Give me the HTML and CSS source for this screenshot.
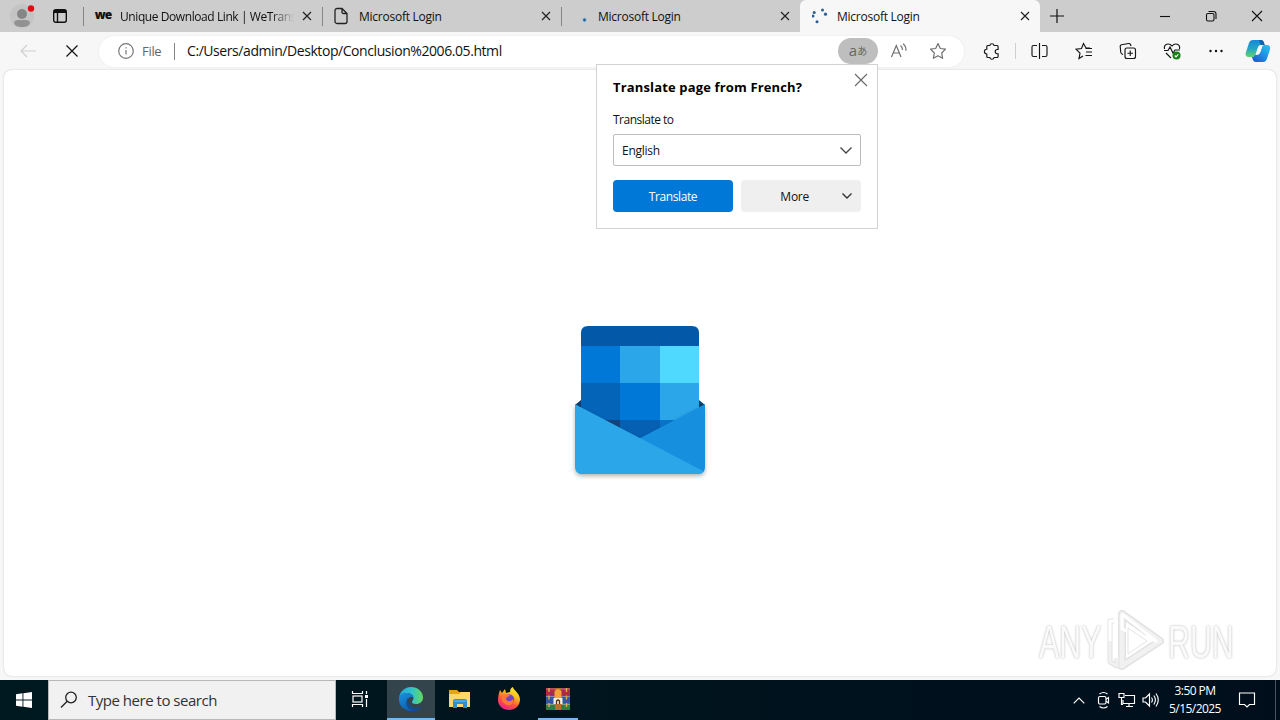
FILE: index.html
```html
<!DOCTYPE html>
<html lang="en">
<head>
<meta charset="utf-8">
<title>Microsoft Login</title>
<link rel="stylesheet" href="styles.css">
</head>
<body>
<div class="screen">
  <header class="tabbar">
    <div class="tab-tools">
      <svg class="avatar" width="26" height="26" viewBox="0 0 26 26"><circle cx="13" cy="13" r="12" fill="#c4c4c4"/><circle cx="13" cy="11" r="5" fill="#868686"/><path d="M5 20c0-2 2-3 4-3h8c2 0 4 1 4 3-1 3-4 4-8 4s-7-1-8-4z" fill="#929292"/><circle cx="22" cy="5.500" r="3.200" fill="#e30a14"/></svg>
      <svg class="workspaces" width="16" height="16" viewBox="0 0 16 16" fill="none" stroke="#111" stroke-width="1.400"><rect x="1.700" y="1.700" width="12.600" height="12.600" rx="2"/><path d="M2 3.500h12" stroke-width="3"/><path d="M5.500 5v9"/></svg>
    </div>
    <div class="tab">
      <span class="favicon we">we</span><span class="tab-title fade">Unique Download Link | WeTrans</span>
      <svg class="close" viewBox="0 0 10 10"><path d="M1 1l8 8M9 1l-8 8"/></svg>
    </div>
    <div class="tab">
      <span class="favicon"><svg width="16" height="18" viewBox="0 0 16 18" fill="none" stroke="#222" stroke-width="1.300"><path d="M3 1.500h5l5 5v8a2 2 0 0 1-2 2H3a2 2 0 0 1-2-2v-11a2 2 0 0 1 2-2zM8 1.500V5q0 1.500 1.500 1.500H13"/></svg></span><span class="tab-title">Microsoft Login</span>
      <svg class="close" viewBox="0 0 10 10"><path d="M1 1l8 8M9 1l-8 8"/></svg>
    </div>
    <div class="tab">
      <span class="favicon"><svg width="16" height="16" viewBox="0 0 16 16"><circle cx="11.500" cy="12" r="2.400" fill="#9fc6e2"/><circle cx="11.500" cy="12" r="1.400" fill="#255a8c"/></svg></span><span class="tab-title">Microsoft Login</span>
      <svg class="close" viewBox="0 0 10 10"><path d="M1 1l8 8M9 1l-8 8"/></svg>
    </div>
    <div class="tab active">
      <span class="favicon"><svg width="16" height="16" viewBox="0 0 16 16" fill="#2b5f93"><circle cx="1" cy="8" r="1.500"/><circle cx="2.200" cy="4.500" r="1.500"/><circle cx="10.500" cy="2" r="1.500"/><circle cx="13.500" cy="6.200" r="1.600"/><circle cx="5" cy="13.700" r="1.500"/></svg></span><span class="tab-title">Microsoft Login</span>
      <svg class="close" viewBox="0 0 10 10"><path d="M1 1l8 8M9 1l-8 8"/></svg>
    </div>
    <div class="newtab"><svg width="14" height="14" viewBox="0 0 14 14" stroke="#111" stroke-width="1.200"><path d="M7 0v14M0 7h14"/></svg></div>
    <div class="window-buttons">
      <svg viewBox="0 0 46 32"><path d="M18 16.500h10"/></svg>
      <svg viewBox="0 0 46 32"><rect x="18.500" y="13.500" width="7.500" height="7.500" rx="1.500"/><path d="M20.500 11.500h5q2.500 0 2.500 2.500v5"/></svg>
      <svg viewBox="0 0 46 32"><path d="M18 11l10 10M28 11l-10 10"/></svg>
    </div>
  </header>

  <nav class="toolbar">
    <div class="cell"><svg width="16" height="14" viewBox="0 0 16 14" fill="none" stroke="#cfcfcf" stroke-width="1.200"><path d="M16 7H1M7 1L1 7l6 6"/></svg></div>
    <div class="cell"><svg width="12" height="12" viewBox="0 0 12 12" stroke="#111" stroke-width="1.200"><path d="M.5.500l11 11M11.500.500l-11 11"/></svg></div>
    <div class="address">
      <svg class="info" width="16" height="16" viewBox="0 0 16 16" fill="none" stroke="#777" stroke-width="1.200"><circle cx="8" cy="8" r="7.300"/><path d="M8 7v4.500M8 4.200v1.300"/></svg>
      <span class="scheme">File</span>
      <span class="url">C:/Users/admin/Desktop/Conclusion%2006.05.html</span>
      <span class="translate-chip"><span>a</span><span class="kana">あ</span></span>
      <svg class="read" width="18" height="16" viewBox="0 0 18 16" fill="none" stroke="#707070" stroke-width="1.200"><path d="M1.500 14L6.300 2.500 11 14M3.300 10h6M10.500 2.500q2 1.500 2 4.500M13 .8q3.300 2.500 3 7"/></svg>
      <svg class="star" width="18" height="18" viewBox="0 0 18 18" fill="none" stroke="#707070" stroke-width="1.200" stroke-linejoin="round"><path d="M9 1.500l2.300 5 5.200.700-3.800 3.800.9 5.300L9 13.800l-4.600 2.500.9-5.300L1.500 7.200l5.200-.7z"/></svg>
    </div>
    <div class="actions">
      <div class="cell puzzle"><svg viewBox="0 0 18 18"><path d="M4.800 3.500h2a2.200 2.200 0 0 1 4.300 0h3q1 0 1 1v3h-.8a2.100 2.100 0 0 0 0 4.200h.8v2.800q0 1-1 1h-3a2.200 2.200 0 0 1-4.300 0h-2q-1 0-1-1v-2.500a2.200 2.200 0 0 1 0-4.800V4.500q0-1 1-1z"/></svg></div>
      <div class="rule"></div>
      <div class="cell split"><svg viewBox="0 0 18 18"><path d="M9.500 1v16M7 3.500H3.500Q2 3.500 2 5v8q0 1.500 1.500 1.500H7M12 3.500h3.500Q17 3.500 17 5v8q0 1.500-1.500 1.500H12"/></svg></div>
      <div class="cell"><svg viewBox="0 0 18 18"><path d="M15 6h-4L8.500 1.500l-2 5-5.500.700 4 4L4 16.500l4-2.500M10.500 6.500H17M11 10h6M10.500 13.500h6.500"/></svg></div>
      <div class="cell"><svg viewBox="0 0 18 18"><rect x="6" y="6" width="10.500" height="10.500" rx="2"/><path d="M11.250 8.500v5.500M8.500 11.250H14M4 12.500l-1-.5Q2 11.500 1.800 10.500L1.200 4.500Q1 3 2.500 2.700l7-1.200q1.500-.2 2 1l.5 1.500"/></svg></div>
      <div class="cell"><svg viewBox="0 0 18 18"><path d="M1.500 7C.5 2 6 .5 9 4c3-3.500 8.500-2 7.500 3M1 8.500h4L7 5l3 6 2-3h5M3 11l5 5"/><circle cx="13.500" cy="13.500" r="4" fill="#168116" stroke="none"/><path d="M11.800 13.500l1.200 1.300 2.300-2.500" stroke="#fff"/></svg></div>
      <div class="cell"><svg viewBox="0 0 18 18"><g fill="#111" stroke="none"><circle cx="3.500" cy="9" r="1.200"/><circle cx="9" cy="9" r="1.200"/><circle cx="14.500" cy="9" r="1.200"/></g></svg></div>
      <svg class="copilot" width="26" height="24" viewBox="0 0 26 24"><defs><linearGradient id="cp1" x1="0" y1="0" x2="0" y2="1"><stop offset="0" stop-color="#1787d8"/><stop offset=".5" stop-color="#22a6c7"/><stop offset="1" stop-color="#63d26a"/></linearGradient><linearGradient id="cp2" x1="1" y1="0" x2="0" y2="1"><stop offset="0" stop-color="#2cc6f2"/><stop offset="1" stop-color="#1554d1"/></linearGradient></defs><path d="M8 1h8q2 0 2.700 2l1 3h-4q-2 0-2.700 2l-2.500 7.500Q10 18 7.500 18H4c-3 0-4-2-3-5L4 4Q5 1 8 1z" fill="url(#cp1)"/><path d="M19.500 6H22q4 0 3 4.500l-3 9Q21 23 18 23h-7q-2.500 0-3.200-2.500L7 18q2.500 0 3.500-2.500l1 .5q3 0 4-3l2-6q.5-1 2-1z" fill="url(#cp2)"/><path d="M14 1h2q2 0 2.700 2l1 3h-4z" fill="#1260ae"/></svg>
    </div>
  </nav>

  <main class="viewport">
    <svg class="mail-logo" width="138" height="160" viewBox="0 0 138 160">
      <defs><clipPath id="calendar"><path d="M10 112V11q0-7 7-7h104q7 0 7 7v101l-59 20z"/></clipPath><clipPath id="envelope"><path d="M4 82l65 34 65-34v63q0 7-7 7H11q-7 0-7-7z"/></clipPath><filter id="soft" x="-10%" y="-10%" width="120%" height="130%"><feDropShadow dx="0" dy="2" stdDeviation="2" flood-color="#000" flood-opacity=".3"/></filter></defs>
      <path d="M4 83l6-5h118l6 5-65 34z" fill="#123b6d"/>
      <g clip-path="url(#calendar)"><path d="M10 4h118v20H10z" fill="#0359a7"/><path d="M10 24h39v37H10zM49 61h40v37H49z" fill="#0078d7"/><path d="M49 24h40v37H49zM89 61h39v37H89z" fill="#2aa6e9"/><path d="M89 24h39v37H89z" fill="#50d9ff"/><path d="M10 61h39v37H10z" fill="#0364b8"/><path d="M10 98h39v20H10z" fill="#14447d"/><path d="M49 98h40v20H49z" fill="#0560b3"/><path d="M89 98h39v20H89z" fill="#0874ca"/></g>
      <g filter="url(#soft)"><g clip-path="url(#envelope)"><path d="M134 82v72H4l65-38z" fill="#158fdf"/><path d="M4 82l130 68v6H4z" fill="#2aa6e9"/></g></g>
    </svg>
    <div class="watermark">
      <span class="wm-any">ANY</span>
      <svg width="60" height="64" viewBox="0 0 60 64" fill="none"><g stroke-linejoin="round"><path d="M17 5v52l38-25z" stroke="#e2e2e2" stroke-width="8"/><path d="M9 12H5v41l7 4v-8" stroke="#e2e2e2" stroke-width="5"/><path d="M9 12H5v41l7 4v-8" stroke="#f1f1f1" stroke-width="3"/><path d="M17 5v52l38-25z" stroke="#f1f1f1" stroke-width="5"/><path d="M17 5v15l34 12L17 5M9 12H5v20" stroke="#fff" stroke-width="3"/><path d="M23 19v26l19-13z" fill="#fff" stroke="#e4e4e4"/></g></svg>
      <span class="wm-run">RUN</span>
    </div>
  </main>

  <section class="translate">
    <div class="translate-head"><h2>Translate page from French?</h2><svg width="14" height="14" viewBox="0 0 14 14" stroke="#666" stroke-width="1.100"><path d="M1 1l12 12M13 1L1 13"/></svg></div>
    <div class="field-label">Translate to</div>
    <div class="select"><span>English</span><svg width="12" height="7" viewBox="0 0 12 7" fill="none" stroke="#444" stroke-width="1.300"><path d="M.5.500L6 6 11.500.500"/></svg></div>
    <div class="buttons"><div class="btn primary"><span>Translate</span></div><div class="btn more"><span>More</span><svg width="10" height="6" viewBox="0 0 10 6" fill="none" stroke="#333" stroke-width="1.400"><path d="M.5.500L5 5 9.500.500"/></svg></div></div>
  </section>

  <footer class="taskbar">
    <div class="start"><svg width="16" height="16" viewBox="0 0 16 16" fill="#fff"><path d="M0 2.200L6.500 1.300v6.300H0zM7.400 1.200L16 0v7.600H7.400zM0 8.400h6.500v6.300L0 13.800zM7.400 8.400H16V16l-8.600-1.200z"/></svg></div>
    <div class="search"><svg width="18" height="18" viewBox="0 0 18 18" fill="none" stroke="#222" stroke-width="1.300"><circle cx="11" cy="6.500" r="5.300"/><path d="M7.200 10.300L1 16.500"/></svg><span>Type here to search</span></div>
    <div class="task"><svg width="18" height="18" viewBox="0 0 18 18" fill="none" stroke="#fff" stroke-width="1.200"><path d="M1.500 1v2.500h10V1M1.500 17v-2.500h10V17M15.500 1v3M15.500 9v8"/><rect x="2" y="6" width="9" height="6"/><path d="M14 5h3v3h-3z" fill="#fff" stroke="none"/></svg></div>
    <div class="task current open"><svg width="26" height="26" viewBox="0 0 26 26"><defs><linearGradient id="ea" x1="0" y1=".3" x2="1" y2=".3"><stop offset="0" stop-color="#23a5df"/><stop offset=".55" stop-color="#31c5c7"/><stop offset="1" stop-color="#65d85a"/></linearGradient><linearGradient id="eb" x1="0" y1="0" x2=".6" y2="1"><stop offset="0" stop-color="#1a91df"/><stop offset="1" stop-color="#0a5aaa"/></linearGradient></defs><path d="M1 12C2 5 7 1 13 1c7 0 12 5 12 10.500 0 4-3 6.500-7 6.500-3 0-4-1-4-2 0-1 1.500-1.500 1.500-4C15.500 9 12 7 8.500 7 5 7 2 9 1 12z" fill="url(#ea)"/><path d="M1 12c1-3.500 4-5 7.500-5 4 0 7 2 7 5-1-1-2-1-3-1-3 1-4 4-3 7 1 3 4 5 8 5 2 0 4-1 6-2-2.500 3-6 4-9.500 4C6 25 0 19 1 12z" fill="url(#eb)"/><path d="M10 12c-4 5-1 11 5 12.800 4 .2 7-1.500 9-4.300-3 1.800-8 2-11-.5-3-2.300-3-5-3-8z" fill="#134c91"/></svg></div>
    <div class="task"><svg width="24" height="22" viewBox="0 0 24 22"><path d="M1 2h8l2 2h11v4H1z" fill="#e7a21b"/><path d="M1 6h10l2-2h9v15H1z" fill="#ffd76a"/><path d="M5 20v-7q0-2 2-2h10q2 0 2 2v7h-4v-4H9v4z" fill="#2f8ed2"/><path d="M6 13h12" stroke="#6bc2ee" stroke-width="1"/></svg></div>
    <div class="task firefox"><svg width="26" height="26" viewBox="0 0 26 26"><defs><linearGradient id="fa" x1=".8" y1="0" x2=".3" y2="1"><stop offset="0" stop-color="#fff045"/><stop offset=".35" stop-color="#ffbd20"/><stop offset=".65" stop-color="#ff563b"/><stop offset="1" stop-color="#e5228c"/></linearGradient></defs><path d="M4 4l2 3 3-4 1 4 4-1q0-4 3-5c0 3 6 5 7 12 0 7-5 11-11 11S2 20 2 14c0-4 1-7 2-10z" fill="url(#fa)"/><circle cx="13" cy="13.500" r="5.200" fill="#7743c5"/><path d="M6 9c3-2 5 0 8 0-1 2-4 2-4 4 1 3 5 3 7 0 2 5-4 8-8 5-3-2-4-5-3-9z" fill="#ff7a2c"/></svg></div>
    <div class="task open rar"><svg width="24" height="24" viewBox="0 0 24 24"><path d="M0 1h24v7H0z" fill="#a92c43"/><path d="M0 8h24v8H0z" fill="#3456a9"/><path d="M0 16h24v7H0z" fill="#278245"/><path d="M0 2h24M0 9.500h24M0 17.500h24" stroke="#e2b7b7" stroke-width="1" opacity=".5"/><path d="M3 1v22M20.500 1v22" stroke="#d8b14c" stroke-width="1.400" stroke-dasharray="4 3.500"/><path d="M9 1h6v22H9z" fill="#b9702c"/><path d="M8.500 11V4.500q3.500-5 7 0V11z" fill="#f2a33c"/><path d="M7.500 11h9v6h-9z" fill="#f7eee0"/><path d="M10.500 17v-3q1.500-2 3 0v3" stroke="#50321d" stroke-width="1.300" fill="none"/></svg></div>
    <div class="tray">
      <svg class="chev" width="12" height="7" viewBox="0 0 12 7"><path d="M.7 6.300L6 1l5.300 5.300"/></svg>
      <svg class="meet" width="14" height="18" viewBox="0 0 14 18"><rect x="1.500" y="5.500" width="7.500" height="7.500" rx="1.500"/><path d="M9 8.300l2.500-1.800v5.500L9 10.300M2.500 3q4-3 8 0M2.500 15.500q4 3 8 0"/></svg>
      <svg class="net" width="18" height="16" viewBox="0 0 18 16"><path d="M7 3.500h9.500v8H5V8M8 14.500h7M11 11.500v3M1 1.500h5v4H1zM3.500 5.500v7H5"/></svg>
      <svg class="vol" width="18" height="16" viewBox="0 0 18 16"><path d="M1 6h2.500L7.500 2v12L3.500 10H1zM9.500 5.500q1.800 2.500 0 5M11.800 3.500q3.200 4.500 0 9M14 1.500q4.500 6.500 0 13"/></svg>
      <div class="clock"><span>3:50 PM</span><span class="date">5/15/2025</span></div>
      <svg class="note" width="18" height="18" viewBox="0 0 18 18"><path d="M1.500 2h15v11.500h-5L9 16l-2.500-2.500h-5z"/></svg>
      <div class="peek"></div>
    </div>
  </footer>
</div>
</body>
</html>
```
FILE: styles.css
```css
* { box-sizing: border-box; }
body { margin: 0; font-family: "Open Sans", "Noto Sans", sans-serif; font-size: 12px; color: #111; }
svg { display: block; flex: none; }
.screen { position: relative; width: 1280px; height: 720px; overflow: hidden; display: flex; flex-direction: column; background: #f7f7f7; }

.tabbar { height: 32px; flex: none; display: flex; background: #cdcdcd; }
.tab-tools { width: 83px; display: flex; align-items: center; padding-left: 9px; }
.workspaces { margin-left: 17px; }
.tab { width: 239px; height: 32px; display: flex; align-items: center; padding: 0 10px 0 11px; border-left: 1px solid transparent; background: linear-gradient(#858585, #858585) no-repeat 0 7px / 1px 19px; background-origin: border-box; }
.favicon { width: 16px; display: flex; flex: none; justify-content: center; }
.we { font-weight: 800; font-size: 12px; line-height: 16px; letter-spacing: -.8px; padding-bottom: 2px; }
.tab-title { flex: 1; margin-left: 9px; font-size: 12px; letter-spacing: -.25px; line-height: 18px; padding-top: 1px; white-space: nowrap; }
.fade { letter-spacing: -.42px; -webkit-mask-image: linear-gradient(90deg, #000 83%, transparent 96%); mask-image: linear-gradient(90deg, #000 83%, transparent 96%); }
.close { width: 10px; height: 10px; stroke: #222; stroke-width: 1.2; }
.tab.active { width: 240px; background: #f7f7f7; border-radius: 6px 6px 0 0; }
.newtab { padding: 9px 0 0 10px; }
.window-buttons { display: flex; margin-left: auto; }
.window-buttons svg { width: 46px; height: 32px; fill: none; stroke: #111; stroke-width: 1.1; }

.toolbar { height: 38px; flex: none; display: flex; align-items: center; padding: 0 2px 0 6px; }
.cell { width: 44px; height: 30px; display: flex; align-items: center; justify-content: center; }
.address { width: 865px; height: 31px; margin-left: 5px; padding: 0 17px 0 19px; display: flex; align-items: center; border-radius: 16px; background: #fff; box-shadow: 0 0 2px #e4e4e4; }
.scheme { width: 33px; margin-left: 8px; border-right: 1px solid #858585; font-size: 13px; line-height: 17px; letter-spacing: -.3px; color: #666; }
.url { flex: 1; margin-left: 12px; font-size: 14px; line-height: 20px; letter-spacing: -.43px; }
.translate-chip { width: 40px; height: 26px; display: flex; align-items: center; justify-content: center; border-radius: 13px; background: #bebebe; color: #666; font-size: 15px; line-height: 20px; }
.translate-chip > span { margin-top: -2px; }
.translate-chip .kana { font: 10px/14px "Noto Sans CJK JP", sans-serif; margin-top: 0; }
.read { margin-left: 12px; }
.star { margin-left: 21px; }
.actions { display: flex; align-items: center; margin-left: 5px; }
.actions .cell svg { width: 18px; height: 18px; fill: none; stroke: #151515; stroke-width: 1.15; }
.puzzle { padding-left: 1px; }
.split { padding-right: 2px; }
.rule { width: 1px; height: 16px; margin: 0 2px; background: #cfcfcf; }
.copilot { margin-left: 7px; }

.viewport { height: 606px; flex: none; margin: 0 4px; display: flex; align-items: flex-end; justify-content: flex-end; border-radius: 8px; background: #fff; box-shadow: 0 0 2px #c4c4c4; }
.mail-logo { margin: 0 328px 194px 0; }
.watermark { display: flex; align-items: center; margin: 0 44px 3px 0; font: 46px/60px "Liberation Sans", sans-serif; color: #fafafa; text-shadow: 0 0 3px #c2c2c2, 0 0 2px #ddd; }
.wm-any, .wm-run { display: block; width: 66px; padding-top: 2px; white-space: nowrap; transform: scaleX(.66); transform-origin: left; }
.wm-any { padding-left: 3px; }
.wm-run { padding-left: 3px; }
.watermark svg { margin: 0 1px 0 2px; }

.translate { position: absolute; left: 596px; top: 64px; width: 282px; height: 165px; padding: 9px 16px 0; background: #fff; border: 1px solid #d3d3d3; }
.translate-head { display: flex; height: 28px; justify-content: space-between; margin-right: -7px; }
.translate-head svg { margin-top: -1px; }
.translate h2 { margin: 3px 0 0; font-size: 13px; line-height: 20px; font-weight: 700; letter-spacing: .15px; color: #000; }
.field-label { margin-top: 9px; line-height: 18px; letter-spacing: -.5px; }
.select { height: 32px; margin-top: 5px; padding: 0 8px; display: flex; align-items: center; justify-content: space-between; border: 1px solid #bdbdbd; border-radius: 2px; letter-spacing: -.25px; }
.buttons { display: flex; gap: 8px; margin-top: 14px; }
.btn { width: 120px; height: 32px; display: flex; align-items: center; justify-content: center; border-radius: 4px; letter-spacing: -.4px; }
.primary { background: #0078d7; color: #fff; }
.more { background: #efefef; justify-content: flex-end; padding-right: 9px; letter-spacing: -.25px; }
.more svg { margin-left: 33px; }

.taskbar { height: 40px; flex: none; margin-top: auto; display: flex; background: linear-gradient(90deg, #001820, #00141e 55%, #000e1b); }
.start { width: 48px; display: flex; align-items: center; justify-content: center; }
.search { width: 288px; display: flex; align-items: center; padding-left: 11px; border: 1px solid #b8b8b8; background: #f1f1f1; font-size: 15px; letter-spacing: -.48px; color: #333; }
.search span { margin-left: 10px; }
.task { width: 48px; display: flex; align-items: center; justify-content: center; border-bottom: 2px solid transparent; }
.current { margin: 0 1px 0 3px; background: #33444d; }
.firefox { padding-left: 2px; }
.open { border-bottom-color: #76b9ed; }
.rar { width: 40px; margin-left: 6px; }
.tray { display: flex; align-items: center; margin-left: auto; color: #fff; }
.tray svg { fill: none; stroke: #fff; stroke-width: 1.15; }
.meet { margin-left: 12px; }
.net { margin-left: 7px; }
.vol { margin-left: 6px; }
.clock { width: 70px; display: flex; flex-direction: column; align-items: center; font-size: 12px; line-height: 18px; letter-spacing: -.55px; }
.note { margin-left: 8px; }
.peek { width: 1px; height: 40px; margin: 0 4px 0 19px; background: #4a5360; }
```
